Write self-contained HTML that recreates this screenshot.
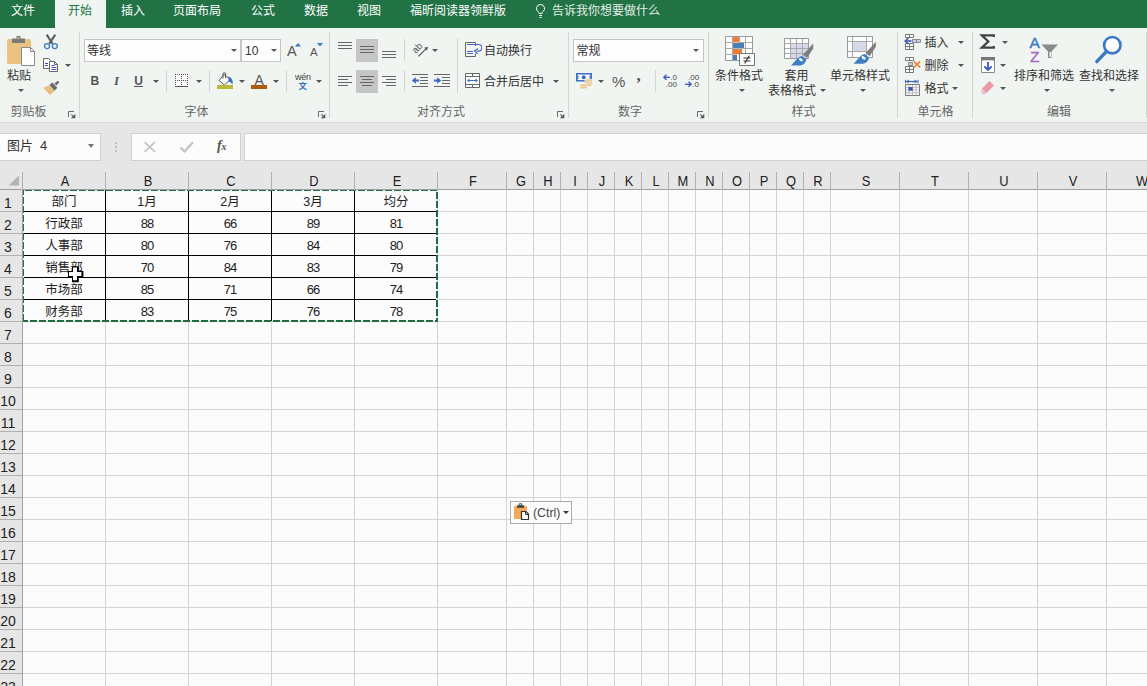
<!DOCTYPE html>
<html lang="zh-CN"><head><meta charset="utf-8"><title>Excel</title>
<style>
*{box-sizing:border-box;margin:0;padding:0}
html,body{width:1147px;height:686px;overflow:hidden;background:#fcfcfc}
body{position:relative;font-family:"Liberation Sans","Noto Sans CJK SC",sans-serif;font-size:12px;color:#333}
.abs,#tabs span,#ribbon *,#fbar *,#grid *,#hdr *,#rows *{position:absolute}
#tabs{position:absolute;left:0;top:0;width:1147px;height:28px;background:#217346}
#tabs span{top:3px;height:16px;line-height:16px;color:#fff;font-size:12px;white-space:nowrap}
#tabs .act{left:55px;top:0;width:51px;height:28px;background:#f1f5f1}
#ribbon{position:absolute;left:0;top:28px;width:1147px;height:94px;background:#f1f5f1}
#ribbon .sep{top:4px;width:1px;height:86px;background:#d2d5d2}
#ribbon .gl{top:76px;height:16px;line-height:16px;color:#666;font-size:12px;white-space:nowrap}
#ribbon .t{height:16px;line-height:16px;font-size:12px;color:#333;white-space:nowrap}
#ribbon .ar{width:0;height:0;border-left:3px solid transparent;border-right:3px solid transparent;border-top:3px solid #555}
#fbar{position:absolute;left:0;top:122px;width:1147px;height:49px;background:#e6e6e6;border-top:1px solid #dadada}
#fbar .box{top:10px;height:28px;background:#fcfcfc;border:1px solid #cfcfcf}
#hdr{position:absolute;left:0;top:171px;width:1147px;height:19px;background:#e6e6e6;border-bottom:1px solid #9f9f9f}
#hdr span{top:1px;height:18px;line-height:18px;font-size:14px;color:#222;text-align:center;transform:scaleX(.920)}
#hdr i{top:1px;width:1px;height:18px;background:#b0b0b0}
#rows{position:absolute;left:0;top:190px;width:23px;height:496px;background:#e6e6e6;border-right:1px solid #9f9f9f}
#rows span{left:0;width:16px;height:22px;line-height:27px;font-size:14px;color:#222;text-align:center;border-bottom:1px solid #b0b0b0;width:22px;padding-right:6px}
#grid{position:absolute;left:23px;top:190px;width:1124px;height:496px;background:#fcfcfc}
#grid i.v{top:0;width:1px;height:496px;background:#d4d4d4}
#grid i.h{left:0;height:1px;width:1124px;background:#d4d4d4}
#grid b{background:#000}
#grid span{height:21px;line-height:25px;font-size:12.500px;color:#222;text-align:center;font-weight:normal}
#grid span.n{letter-spacing:-1px;font-size:13px;line-height:22px;padding-top:1px}
</style></head><body>

<div id="tabs"><div class="abs act"></div>
<span style="left:11px;color:#fff">文件</span>
<span style="left:68px;color:#217346">开始</span>
<span style="left:121px;color:#fff">插入</span>
<span style="left:173px;color:#fff">页面布局</span>
<span style="left:251px;color:#fff">公式</span>
<span style="left:304px;color:#fff">数据</span>
<span style="left:357px;color:#fff">视图</span>
<span style="left:410px;color:#fff">福昕阅读器领鲜版</span>
<span style="left:552px;color:#e4efe7">告诉我你想要做什么</span>
<svg class="abs" style="left:534px;top:3px" width="13" height="16" viewBox="0 0 13 16"><path d="M6.5 1.5a4 4 0 0 0-2.3 7.3c.5.5.8 1 .8 1.700h3c0-.7.3-1.200.8-1.700A4 4 0 0 0 6.500 1.500z" fill="none" stroke="#fff" stroke-width="1"/><path d="M5 12.500h3M5.500 14.500h2" stroke="#fff" stroke-width="1"/></svg>
</div>
<div id="ribbon"><svg style="left:6px;top:7px" width="30" height="32" viewBox="0 0 30 32"><rect x="1" y="4" width="24" height="25" rx="1.500" fill="#eac282"/><path d="M6 3.500h4.500v-2.500h4v2.500h4.500v4.500h-13z" fill="#7a7a7a"/><rect x="11.500" y="2.200" width="2" height="1.500" fill="#eac282"/><path d="M15.500 12.500h9l4 4v14h-13z" fill="#fff" stroke="#8a8a8a" stroke-width="1"/><path d="M24.500 12.500v4h4" fill="none" stroke="#8a8a8a" stroke-width="1"/></svg>
<span class="t" style="left:7px;top:39.5px">粘贴</span>
<i class="ar" style="left:17.5px;top:61px"></i>
<svg style="left:43px;top:6px" width="16" height="16" viewBox="0 0 16 16"><path d="M3.700 0.600l5.800 9M12.300 0.600L6.300 9.600" stroke="#5c5c5c" stroke-width="2.100" fill="none"/><circle cx="4" cy="12.100" r="2.500" fill="none" stroke="#3a78c4" stroke-width="1.300"/><circle cx="11.800" cy="12.100" r="2.500" fill="none" stroke="#3a78c4" stroke-width="1.300"/></svg>
<svg style="left:42px;top:29px" width="17" height="16" viewBox="0 0 17 16"><path d="M1.500 1.500h5l2 2v8h-7z" fill="#fdfdfd" stroke="#686868" stroke-width="1"/><path d="M7.500 4.500h5l3 3v7h-8z" fill="#fdfdfd" stroke="#686868" stroke-width="1"/><path d="M12.500 4.500v3h3" fill="none" stroke="#686868" stroke-width="1"/><path d="M9.500 8.500h3M9.500 10.500h5M9.500 12.500h5" stroke="#3a55b4" stroke-width="1"/><path d="M3 6.500h3M3 8.500h3" stroke="#3a55b4" stroke-width="1"/></svg>
<i class="ar" style="left:64.5px;top:35.5px"></i>
<svg style="left:43px;top:52px" width="17" height="16" viewBox="0 0 17 16"><path d="M0.300 7.700l5.700-2.100 5.300 5.600-4.300 3.900z" fill="#e8bd7a"/><path d="M6.400 5.100l2.900-2.500 5.100 5.100-2.900 3z" fill="#6a6a6a"/><path d="M11.300 3.600l3.600-2.800 1.500 1.400-3 3.400z" fill="#6a6a6a"/></svg>
<span class="gl" style="left:10.5px;top:75.5px">剪贴板</span>
<svg style="left:68px;top:83px" width="8" height="8" viewBox="0 0 8 8"><path d="M0.500 6V0.500H6" fill="none" stroke="#6a6a6a" stroke-width="1"/><path d="M3.300 3.300L6 6" stroke="#6a6a6a" stroke-width="1.200"/><path d="M7.300 2.800V7.300H2.800z" fill="#5a5a5a"/></svg>
<i class="sep" style="left:79px;top:4px;height:86px"></i>
<div style="left:84px;top:11px;width:157px;height:23px;background:#fdfdfd;border:1px solid #c6c6c6"></div>
<div style="left:241px;top:11px;width:40px;height:23px;background:#fdfdfd;border:1px solid #c6c6c6"></div>
<span class="t" style="left:87px;top:14.5px">等线</span>
<i class="ar" style="left:230.5px;top:21px"></i>
<span class="t" style="left:245px;top:14.5px;font-size:12px">10</span>
<i class="ar" style="left:270.5px;top:21px"></i>
<span class="t" style="left:287px;top:14.5px;font-size:14.500px;color:#555">A</span>
<svg style="left:295px;top:14.5px" width="6" height="4" viewBox="0 0 6 4"><path d="M0 3.500L3 0L6 3.500z" fill="#3a78c4"/></svg>
<span class="t" style="left:310px;top:15.5px;font-size:11.500px;color:#555">A</span>
<svg style="left:316.5px;top:14.5px" width="6" height="4" viewBox="0 0 6 4"><path d="M0 0H6L3 3.500z" fill="#3a78c4"/></svg>
<span class="t" style="left:90.5px;top:44.5px;font-weight:bold;font-size:12px;color:#555">B</span>
<span class="t" style="left:114px;top:44.5px;font-family:'Liberation Serif',serif;font-style:italic;font-weight:bold;font-size:13px;color:#555">I</span>
<span class="t" style="left:134px;top:44.5px;font-size:12px;font-weight:bold;color:#555;border-bottom:1px solid #555;height:15px;line-height:18px;top:44px;width:9px;text-align:center;overflow:hidden">U</span>
<i class="ar" style="left:152.5px;top:52px"></i>
<i class="sep" style="left:166px;top:42px;height:22px"></i>
<svg style="left:175px;top:46px" width="14" height="14" viewBox="0 0 14 14"><rect x="0" y="0" width="13" height="12" fill="#fdfdfd"/><path d="M0 0.500h13M0 6.500h13M0.500 0v11M6.500 0v11M12.500 0v11" stroke="#4a4a4a" stroke-width="1" stroke-dasharray="1 1" fill="none" shape-rendering="crispEdges"/><path d="M0 12.500h13" stroke="#555" stroke-width="1" shape-rendering="crispEdges"/></svg>
<i class="ar" style="left:195.5px;top:52px"></i>
<i class="sep" style="left:209px;top:42px;height:22px"></i>
<svg style="left:216px;top:44px" width="19" height="18" viewBox="0 0 19 18"><path d="M8 2.500l6.500 4.800-6 5.700-5.500-4.500z" fill="#fdfdfd" stroke="#555" stroke-width="1"/><path d="M7 6.500v-4.500a1.300 1.300 0 0 1 2.600 0V6" fill="none" stroke="#555" stroke-width="1"/><path d="M12.500 4.500c3 1 5 4 4 8-.800-1.500-2-2.500-4-3.300z" fill="#3a6fc4"/><rect x="1" y="13" width="16" height="4" fill="#bcb83c"/></svg>
<i class="ar" style="left:238.5px;top:52px"></i>
<span class="t" style="left:254.5px;top:44px;font-size:14px;color:#555">A</span>
<div style="left:251px;top:57px;width:16px;height:4px;background:#b25808"></div>
<i class="ar" style="left:272.5px;top:52px"></i>
<i class="sep" style="left:286px;top:42px;height:22px"></i>
<span class="t" style="left:295px;top:40.5px;font-size:9px;color:#444;letter-spacing:-0.300px">wén</span>
<span class="t" style="left:298.5px;top:50px;font-size:8.500px;color:#2f6fc4;font-weight:bold">文</span>
<i class="ar" style="left:315.5px;top:52px"></i>
<span class="gl" style="left:184.5px;top:75.5px">字体</span>
<svg style="left:318px;top:83px" width="8" height="8" viewBox="0 0 8 8"><path d="M0.500 6V0.500H6" fill="none" stroke="#6a6a6a" stroke-width="1"/><path d="M3.300 3.300L6 6" stroke="#6a6a6a" stroke-width="1.200"/><path d="M7.300 2.800V7.300H2.800z" fill="#5a5a5a"/></svg>
<i class="sep" style="left:329px;top:4px;height:86px"></i>
<div style="left:356px;top:11px;width:22px;height:23px;background:#c6c6c6"></div>
<div style="left:356px;top:42px;width:22px;height:23px;background:#c6c6c6"></div>
<div style="left:338px;top:14px;width:14px;height:1px;background:#666"></div>
<div style="left:338px;top:17px;width:14px;height:1px;background:#666"></div>
<div style="left:338px;top:20px;width:14px;height:1px;background:#666"></div>
<div style="left:360px;top:18px;width:14px;height:1px;background:#666"></div>
<div style="left:360px;top:21px;width:14px;height:1px;background:#666"></div>
<div style="left:360px;top:24px;width:14px;height:1px;background:#666"></div>
<div style="left:382px;top:23px;width:14px;height:1px;background:#666"></div>
<div style="left:382px;top:26px;width:14px;height:1px;background:#666"></div>
<div style="left:382px;top:29px;width:14px;height:1px;background:#666"></div>
<div style="left:338px;top:48px;width:14px;height:1px;background:#666"></div>
<div style="left:338px;top:51px;width:10px;height:1px;background:#666"></div>
<div style="left:338px;top:54px;width:14px;height:1px;background:#666"></div>
<div style="left:338px;top:57px;width:10px;height:1px;background:#666"></div>
<div style="left:360px;top:48px;width:14px;height:1px;background:#666"></div>
<div style="left:362px;top:51px;width:10px;height:1px;background:#666"></div>
<div style="left:360px;top:54px;width:14px;height:1px;background:#666"></div>
<div style="left:362px;top:57px;width:10px;height:1px;background:#666"></div>
<div style="left:382px;top:48px;width:14px;height:1px;background:#666"></div>
<div style="left:386px;top:51px;width:10px;height:1px;background:#666"></div>
<div style="left:382px;top:54px;width:14px;height:1px;background:#666"></div>
<div style="left:386px;top:57px;width:10px;height:1px;background:#666"></div>
<i class="sep" style="left:404px;top:11px;height:22px"></i>
<i class="sep" style="left:404px;top:42px;height:22px"></i>
<svg style="left:411px;top:13px" width="18" height="17" viewBox="0 0 18 17"><path d="M7.400 15.400L15.500 7.300" stroke="#555" stroke-width="1.200" fill="none"/><path d="M17 5.800l-3.800 1 2.800 2.800z" fill="#555"/><text x="0" y="0" transform="translate(4.800 13) rotate(-47)" font-family="Liberation Sans,sans-serif" font-size="9.500" fill="#555">ab</text></svg>
<i class="ar" style="left:431.5px;top:21px"></i>
<i class="sep" style="left:457px;top:10px;height:55px"></i>
<svg style="left:464px;top:14px" width="18" height="16" viewBox="0 0 18 16"><path d="M11.500 4V0.500H1.500V14.500H11.500V11.500" fill="none" stroke="#666" stroke-width="1"/><path d="M3 2.500h12M3 9.500h6M3 11.500h6" stroke="#4a62c4" stroke-width="1" fill="none"/><path d="M14.500 2.500a3.300 3.300 0 0 1 0 6.600H12.500" fill="none" stroke="#4a62c4" stroke-width="1.100"/><path d="M13.800 6.500L10.500 9.100l3.300 2.600" fill="none" stroke="#4a62c4" stroke-width="1.100"/></svg>
<span class="t" style="left:484px;top:15px">自动换行</span>
<svg style="left:411px;top:45px" width="18" height="15" viewBox="0 0 18 15"><path d="M1 1.500h16M9 4.500h8M9 7.500h8M9 10.500h8M1 13.500h16" stroke="#666" stroke-width="1" fill="none"/><path d="M3 7.500h5" stroke="#3a62c4" stroke-width="2"/><path d="M0.800 7.500l4-3.200v6.400z" fill="#3a62c4"/></svg>
<svg style="left:433px;top:45px" width="18" height="15" viewBox="0 0 18 15"><path d="M1 1.500h16M9 4.500h8M9 7.500h8M9 10.500h8M1 13.500h16" stroke="#666" stroke-width="1" fill="none"/><path d="M1 7.500h5" stroke="#3a62c4" stroke-width="2"/><path d="M8.200 7.500l-4-3.200v6.400z" fill="#3a62c4"/></svg>
<svg style="left:464px;top:44px" width="17" height="17" viewBox="0 0 17 17"><path d="M1.500 1.500h14v14h-14z" fill="#fff" stroke="#666" stroke-width="1"/><path d="M1.500 4.500h14M1.500 12.500h14M8.500 1.500v3M8.500 12.500v3" stroke="#666" stroke-width="1" fill="none"/><path d="M4.500 8.500h8" stroke="#3a6fc4" stroke-width="1"/><path d="M3 8.500l2.500-2v4zM14 8.500l-2.500-2v4z" fill="#3a6fc4"/></svg>
<span class="t" style="left:484px;top:45.5px">合并后居中</span>
<i class="ar" style="left:553px;top:52px"></i>
<span class="gl" style="left:417px;top:75.5px">对齐方式</span>
<svg style="left:556.5px;top:83px" width="8" height="8" viewBox="0 0 8 8"><path d="M0.500 6V0.500H6" fill="none" stroke="#6a6a6a" stroke-width="1"/><path d="M3.300 3.300L6 6" stroke="#6a6a6a" stroke-width="1.200"/><path d="M7.300 2.800V7.300H2.800z" fill="#5a5a5a"/></svg>
<i class="sep" style="left:568px;top:4px;height:86px"></i>
<div style="left:573px;top:11px;width:131px;height:23px;background:#fdfdfd;border:1px solid #c6c6c6"></div>
<span class="t" style="left:576.5px;top:14.5px">常规</span>
<i class="ar" style="left:693px;top:21px"></i>
<svg style="left:575px;top:44px" width="18" height="18" viewBox="0 0 18 18"><path d="M1.800 1.800h14.400v7h-14.400z" fill="#fdfdfd" stroke="#3a6fc4" stroke-width="1.600"/><circle cx="8.700" cy="5.300" r="2" fill="#3a6fc4"/><path d="M3 3.500v3.500M15 3.500v3.500" stroke="#3a6fc4" stroke-width="1"/><ellipse cx="13.500" cy="8.300" rx="3.800" ry="1.400" fill="#eac282" stroke="#f1f5f1" stroke-width="0.700"/><ellipse cx="13.500" cy="10.600" rx="3.800" ry="1.400" fill="#eac282" stroke="#f1f5f1" stroke-width="0.700"/><ellipse cx="13.500" cy="12.900" rx="3.800" ry="1.400" fill="#eac282" stroke="#f1f5f1" stroke-width="0.700"/><ellipse cx="8.500" cy="13.300" rx="3.800" ry="1.400" fill="#eac282" stroke="#f1f5f1" stroke-width="0.700"/><ellipse cx="8.500" cy="15.600" rx="3.800" ry="1.400" fill="#eac282" stroke="#f1f5f1" stroke-width="0.700"/></svg>
<i class="ar" style="left:597.5px;top:52px"></i>
<span class="t" style="left:612px;top:46px;font-size:15px;color:#555">%</span>
<span class="t" style="left:636.5px;top:39.5px;font-size:17px;font-weight:bold;color:#555;font-family:'Liberation Serif',serif">,</span>
<i class="sep" style="left:655px;top:42px;height:22px"></i>
<svg style="left:662px;top:45px" width="17" height="15" viewBox="0 0 17 15"><path d="M2.500 4.300h5.500" stroke="#3a55b4" stroke-width="1.300"/><path d="M4.500 1.800L1.800 4.300l2.700 2.500" fill="none" stroke="#3a55b4" stroke-width="1.300"/><text x="8.300" y="6.800" font-family="Liberation Sans,sans-serif" font-size="8" fill="#444">.0</text><text x="3.800" y="14" font-family="Liberation Sans,sans-serif" font-size="8" fill="#444">.00</text></svg>
<svg style="left:684px;top:45px" width="17" height="15" viewBox="0 0 17 15"><text x="4" y="6.800" font-family="Liberation Sans,sans-serif" font-size="8" fill="#444">.00</text><path d="M1 11.300h5.500" stroke="#3a55b4" stroke-width="1.300"/><path d="M4.500 8.800L7.200 11.300l-2.700 2.500" fill="none" stroke="#3a55b4" stroke-width="1.300"/><text x="8.300" y="14" font-family="Liberation Sans,sans-serif" font-size="8" fill="#444">.0</text></svg>
<span class="gl" style="left:618px;top:75.5px">数字</span>
<svg style="left:696.5px;top:83px" width="8" height="8" viewBox="0 0 8 8"><path d="M0.500 6V0.500H6" fill="none" stroke="#6a6a6a" stroke-width="1"/><path d="M3.300 3.300L6 6" stroke="#6a6a6a" stroke-width="1.200"/><path d="M7.300 2.800V7.300H2.800z" fill="#5a5a5a"/></svg>
<i class="sep" style="left:708px;top:4px;height:86px"></i>
<svg style="left:724px;top:7px" width="32" height="32" viewBox="0 0 32 32"><path d="M1.500 1.500h27v24h-27z" fill="#fdfdfd"/><rect x="9" y="2" width="6" height="5.500" fill="#ed7d31"/><rect x="9" y="8" width="11" height="5.500" fill="#4a7ebb"/><rect x="9" y="14" width="9" height="5.500" fill="#ed7d31"/><rect x="9" y="20" width="4" height="5" fill="#4a7ebb"/><path d="M1.500 7.500h7M15 7.500h13.500M1.500 13.500h7M20 13.500h8.500M1.500 19.500h7M18 19.500h10.500M8.500 1.500v24M15.500 1.500v6M21.500 1.500v24" stroke="#a8a8a8" stroke-width="1" fill="none"/><path d="M1.500 1.500h27v24h-27z" fill="none" stroke="#9a9a9a" stroke-width="1"/><path d="M15.500 18.500h15v12h-15z" fill="#fdfdfd" stroke="#777" stroke-width="1"/><path d="M19.500 23h7M19.500 26h7M25.300 20.800l-4.600 7.600" stroke="#333" stroke-width="1.100" fill="none"/></svg>
<span class="t" style="left:699px;width:80px;text-align:center;top:40px">条件格式</span>
<i class="ar" style="left:738.5px;top:61px"></i>
<svg style="left:783px;top:9px" width="32" height="30" viewBox="0 0 32 30"><path d="M1.500 1.500h24v20h-24z" fill="#fdfdfd"/><path d="M7.500 6.500h18v15h-18z" fill="#d6d9ea"/><path d="M1.500 6.500h24M1.500 11.500h24M1.500 16.500h24M7.500 1.500v20M13.500 1.500v20M19.500 1.500v20" stroke="#a8a8a8" stroke-width="1" fill="none"/><path d="M1.500 1.500h24v20h-24z" fill="none" stroke="#9a9a9a" stroke-width="1"/><path d="M30.2 6.6L19.9 17.8L23.9 21.1L30.2 11.6z" fill="#7d7d7d"/><path d="M19 19L23.4 22.3C22.7 25.6 20.2 28.6 16.2 28.6L7.7 28.6C11.2 26.6 14.2 19.6 19 19z" fill="#3f7ec4"/><ellipse cx="17.9" cy="22.8" rx="2.300" ry="1.300" transform="rotate(35 17.9 22.8)" fill="#fdfdfd"/></svg>
<span class="t" style="left:756.5px;width:80px;text-align:center;top:40px">套用</span>
<span class="t" style="left:752px;width:80px;text-align:center;top:55px">表格格式</span>
<i class="ar" style="left:819.5px;top:61px"></i>
<svg style="left:846px;top:7px" width="32" height="30" viewBox="0 0 32 30"><path d="M1.500 1.500h25v21h-25z" fill="#fdfdfd"/><rect x="6.500" y="6.500" width="14" height="10" fill="#d6d9ea"/><path d="M1.500 6.500h25M1.500 16.500h25M6.500 1.500v21M20.500 1.500v21" stroke="#a8a8a8" stroke-width="1" fill="none"/><path d="M1.500 1.500h25v21h-25z" fill="none" stroke="#9a9a9a" stroke-width="1"/><path d="M29.9 6.7L19.6 17.9L23.6 21.2L29.9 11.7z" fill="#7d7d7d"/><path d="M18.7 19.1L23.1 22.4C22.4 25.7 19.9 28.7 15.9 28.7L7.4 28.7C10.9 26.7 13.9 19.7 18.7 19.1z" fill="#3f7ec4"/><ellipse cx="17.6" cy="22.9" rx="2.300" ry="1.300" transform="rotate(35 17.6 22.9)" fill="#fdfdfd"/></svg>
<span class="t" style="left:820px;width:80px;text-align:center;top:39.5px">单元格样式</span>
<i class="ar" style="left:859.5px;top:61px"></i>
<span class="gl" style="left:791.5px;top:75.5px">样式</span>
<i class="sep" style="left:897px;top:4px;height:86px"></i>
<svg style="left:904px;top:5px" width="18" height="18" viewBox="0 0 18 18"><path d="M1.500 1.500h8v3h-8zM1.500 10.500h8v6h-8z" fill="#fdfdfd" stroke="#777" stroke-width="1"/><path d="M5.500 1.500v3M5.500 10.500v6M1.500 13.500h8" stroke="#777" stroke-width="1" fill="none"/><path d="M8.500 6.500h8v3h-8z" fill="#c8d0e4" stroke="#888" stroke-width="1"/><path d="M12.500 6.500v3" stroke="#888" stroke-width="1"/><path d="M2.500 8h5" stroke="#3a55b4" stroke-width="1.600"/><path d="M4.300 5L1.200 8l3.100 3" fill="none" stroke="#3a55b4" stroke-width="1.600"/></svg>
<span class="t" style="left:924.5px;top:6.5px">插入</span>
<i class="ar" style="left:957.5px;top:13px"></i>
<svg style="left:904px;top:28px" width="18" height="18" viewBox="0 0 18 18"><path d="M1.500 1.500h8v3h-8zM1.500 10.500h8v6h-8z" fill="#fdfdfd" stroke="#777" stroke-width="1"/><path d="M5.500 1.500v3M5.500 10.500v6M1.500 13.500h8" stroke="#777" stroke-width="1" fill="none"/><path d="M4.500 6.500h4v3h-4z" fill="#c8d0e4" stroke="#888" stroke-width="1"/><path d="M9.800 5.300l6.400 6M16.200 5.300l-6.400 6" stroke="#e8853a" stroke-width="1.700" fill="none"/></svg>
<span class="t" style="left:924.5px;top:29.5px">删除</span>
<i class="ar" style="left:957.5px;top:36px"></i>
<svg style="left:904px;top:51px" width="17" height="18" viewBox="0 0 17 18"><path d="M2 2.500h11.500" stroke="#3a62c4" stroke-width="1.200"/><path d="M1.500 0.800v3.500M14 0.800v3.500" stroke="#3a62c4" stroke-width="1"/><path d="M2.300 2.500l2.500-2v4zM13.200 2.500l-2.500-2v4z" fill="#3a62c4"/><path d="M1.500 5.500h14v11h-14z" fill="#fdfdfd" stroke="#777" stroke-width="1"/><path d="M1.500 8.300h14M1.500 11h14M1.500 13.800h14M5 5.500v11M8.500 5.500v11M12 5.500v11" stroke="#aaa" stroke-width="0.800" fill="none"/><rect x="4.500" y="8" width="4.200" height="3.700" fill="#3a55b4"/></svg>
<span class="t" style="left:924.5px;top:52.5px">格式</span>
<i class="ar" style="left:951.5px;top:59px"></i>
<span class="gl" style="left:917.5px;top:75.5px">单元格</span>
<i class="sep" style="left:972px;top:4px;height:86px"></i>
<svg style="left:979px;top:5px" width="17" height="17" viewBox="0 0 17 17"><path d="M14.800 4V2.300H2.800l6.500 6.200L2.800 14.700h12V13" fill="none" stroke="#444" stroke-width="2.300" stroke-linejoin="miter"/></svg>
<i class="ar" style="left:1001.5px;top:13px"></i>
<svg style="left:980px;top:28px" width="16" height="18" viewBox="0 0 16 18"><path d="M1.500 1.500h13v15h-13z" fill="#fdfdfd" stroke="#8a8a8a" stroke-width="1"/><rect x="1" y="1" width="14" height="3.300" fill="#777"/><path d="M8 6v7.500" stroke="#3a55c4" stroke-width="1.800"/><path d="M4.300 10.300L8 14l3.700-3.700" fill="none" stroke="#3a55c4" stroke-width="1.800"/></svg>
<i class="ar" style="left:999.5px;top:36px"></i>
<svg style="left:980px;top:52px" width="15" height="15" viewBox="0 0 15 15"><path d="M9.500 1l4.500 4.500-7.500 7.500L2 8.500z" fill="#e89aa6"/><path d="M2 8.500L6.500 13l-1.500 1.200H3L0.800 12z" fill="#f0c0c8"/></svg>
<i class="ar" style="left:999.5px;top:59px"></i>
<span class="t" style="left:1029.5px;top:7px;font-size:15.500px;color:#3a78c4;-webkit-text-stroke:0.400px #3a78c4">A</span>
<span class="t" style="left:1030px;top:21px;font-size:15.500px;color:#a566c4;-webkit-text-stroke:0.400px #a566c4">Z</span>
<svg style="left:1041px;top:16px" width="18" height="15" viewBox="0 0 18 15"><path d="M0.500 0.500h16.500l-6.500 7v6.500h-3.500v-6.500z" fill="#8a8a8a"/><path d="M8.500 8v5h1.500v-5z" fill="#f1f5f1"/></svg>
<span class="t" style="left:1004px;width:80px;text-align:center;top:40px">排序和筛选</span>
<i class="ar" style="left:1043.5px;top:61px"></i>
<svg style="left:1094px;top:7px" width="30" height="31" viewBox="0 0 30 31"><circle cx="18.300" cy="10.200" r="8.200" fill="#fdfdfd" stroke="#3a78c4" stroke-width="2.600"/><path d="M12.300 16.600l-9.500 10" stroke="#3a78c4" stroke-width="3.400" stroke-linecap="round"/></svg>
<span class="t" style="left:1069px;width:80px;text-align:center;top:40px">查找和选择</span>
<i class="ar" style="left:1108.5px;top:61px"></i>
<span class="gl" style="left:1047px;top:75.5px">编辑</span>
<i class="sep" style="left:1146px;top:4px;height:86px"></i></div>
<div id="fbar">
<div class="box" style="left:-1px;width:102px"></div>
<span style="left:7px;top:14px;font-size:13px;line-height:18px;color:#333;white-space:nowrap;word-spacing:3.500px">图片 4</span>
<div style="left:88px;top:21px;width:0;height:0;border-left:3.500px solid transparent;border-right:3.500px solid transparent;border-top:4px solid #777"></div>
<div style="left:115px;top:19px;width:2px;height:2px;background:#c0c0c0"></div>
<div style="left:115px;top:23px;width:2px;height:2px;background:#c0c0c0"></div>
<div style="left:115px;top:27px;width:2px;height:2px;background:#c0c0c0"></div>
<div class="box" style="left:131px;width:110px"></div>
<svg style="left:143px;top:18px" width="14" height="12" viewBox="0 0 14 12"><path d="M1.500 1.200l10.500 9.600M12 1.200l-10.500 9.600" stroke="#c2c2c2" stroke-width="1.600" fill="none"/></svg>
<svg style="left:179px;top:18px" width="16" height="13" viewBox="0 0 16 13"><path d="M1.500 6.500l4 4L14 1.200" stroke="#c2c2c2" stroke-width="2.200" fill="none"/></svg>
<span style="left:217px;top:14px;font-family:'Liberation Serif',serif;font-style:italic;font-weight:bold;font-size:14px;line-height:18px;color:#555;white-space:nowrap;letter-spacing:-0.500px">f<span style="position:static;font-size:10.500px">x</span></span>
<div class="box" style="left:244px;width:910px"></div>
</div>
<div id="hdr">
<svg style="left:8px;top:4px" width="12" height="11" viewBox="0 0 12 11"><path d="M11 0.500V10.500H0.500z" fill="#b4b4b4"/></svg>
<i style="left:22px"></i>
<span style="left:24px;width:82px">A</span><i style="left:105px"></i>
<span style="left:107px;width:82px">B</span><i style="left:188px"></i>
<span style="left:190px;width:82px">C</span><i style="left:271px"></i>
<span style="left:273px;width:82px">D</span><i style="left:354px"></i>
<span style="left:356px;width:82px">E</span><i style="left:437px"></i>
<span style="left:439px;width:68px">F</span><i style="left:506px"></i>
<span style="left:508px;width:26px">G</span><i style="left:533px"></i>
<span style="left:535px;width:26px">H</span><i style="left:560px"></i>
<span style="left:562px;width:26px">I</span><i style="left:587px"></i>
<span style="left:589px;width:26px">J</span><i style="left:614px"></i>
<span style="left:616px;width:26px">K</span><i style="left:641px"></i>
<span style="left:643px;width:26px">L</span><i style="left:668px"></i>
<span style="left:670px;width:26px">M</span><i style="left:695px"></i>
<span style="left:697px;width:26px">N</span><i style="left:722px"></i>
<span style="left:724px;width:26px">O</span><i style="left:749px"></i>
<span style="left:751px;width:26px">P</span><i style="left:776px"></i>
<span style="left:778px;width:26px">Q</span><i style="left:803px"></i>
<span style="left:805px;width:26px">R</span><i style="left:830px"></i>
<span style="left:832px;width:68px">S</span><i style="left:899px"></i>
<span style="left:901px;width:68px">T</span><i style="left:968px"></i>
<span style="left:970px;width:68px">U</span><i style="left:1037px"></i>
<span style="left:1039px;width:68px">V</span><i style="left:1106px"></i>
<span style="left:1108px;width:68px">W</span><i style="left:1175px"></i>
</div>
<div id="rows">
<span style="top:0px">1</span>
<span style="top:22px">2</span>
<span style="top:44px">3</span>
<span style="top:66px">4</span>
<span style="top:88px">5</span>
<span style="top:110px">6</span>
<span style="top:132px">7</span>
<span style="top:154px">8</span>
<span style="top:176px">9</span>
<span style="top:198px">10</span>
<span style="top:220px">11</span>
<span style="top:242px">12</span>
<span style="top:264px">13</span>
<span style="top:286px">14</span>
<span style="top:308px">15</span>
<span style="top:330px">16</span>
<span style="top:352px">17</span>
<span style="top:374px">18</span>
<span style="top:396px">19</span>
<span style="top:418px">20</span>
<span style="top:440px">21</span>
<span style="top:462px">22</span>
<span style="top:484px">23</span>
</div>
<div id="grid">
<i class="v" style="left:82px"></i>
<i class="v" style="left:165px"></i>
<i class="v" style="left:248px"></i>
<i class="v" style="left:331px"></i>
<i class="v" style="left:414px"></i>
<i class="v" style="left:483px"></i>
<i class="v" style="left:510px"></i>
<i class="v" style="left:537px"></i>
<i class="v" style="left:564px"></i>
<i class="v" style="left:591px"></i>
<i class="v" style="left:618px"></i>
<i class="v" style="left:645px"></i>
<i class="v" style="left:672px"></i>
<i class="v" style="left:699px"></i>
<i class="v" style="left:726px"></i>
<i class="v" style="left:753px"></i>
<i class="v" style="left:780px"></i>
<i class="v" style="left:807px"></i>
<i class="v" style="left:876px"></i>
<i class="v" style="left:945px"></i>
<i class="v" style="left:1014px"></i>
<i class="v" style="left:1083px"></i>
<i class="v" style="left:1152px"></i>
<i class="h" style="top:21px"></i>
<i class="h" style="top:43px"></i>
<i class="h" style="top:65px"></i>
<i class="h" style="top:87px"></i>
<i class="h" style="top:109px"></i>
<i class="h" style="top:131px"></i>
<i class="h" style="top:153px"></i>
<i class="h" style="top:175px"></i>
<i class="h" style="top:197px"></i>
<i class="h" style="top:219px"></i>
<i class="h" style="top:241px"></i>
<i class="h" style="top:263px"></i>
<i class="h" style="top:285px"></i>
<i class="h" style="top:307px"></i>
<i class="h" style="top:329px"></i>
<i class="h" style="top:351px"></i>
<i class="h" style="top:373px"></i>
<i class="h" style="top:395px"></i>
<i class="h" style="top:417px"></i>
<i class="h" style="top:439px"></i>
<i class="h" style="top:461px"></i>
<i class="h" style="top:483px"></i>
<i class="h" style="top:505px"></i>
<b style="left:1px;top:21px;width:412px;height:1px"></b>
<b style="left:1px;top:43px;width:412px;height:1px"></b>
<b style="left:1px;top:65px;width:412px;height:1px"></b>
<b style="left:1px;top:87px;width:412px;height:1px"></b>
<b style="left:1px;top:109px;width:412px;height:1px"></b>
<b style="left:82px;top:0;width:1px;height:131px"></b>
<b style="left:165px;top:0;width:1px;height:131px"></b>
<b style="left:248px;top:0;width:1px;height:131px"></b>
<b style="left:331px;top:0;width:1px;height:131px"></b>
<span style="left:0px;top:0px;width:82px">部门</span>
<span style="left:83px;top:0px;width:82px">1月</span>
<span style="left:166px;top:0px;width:82px">2月</span>
<span style="left:249px;top:0px;width:82px">3月</span>
<span style="left:332px;top:0px;width:82px">均分</span>
<span style="left:0px;top:22px;width:82px">行政部</span>
<span class="n" style="left:83px;top:22px;width:82px">88</span>
<span class="n" style="left:166px;top:22px;width:82px">66</span>
<span class="n" style="left:249px;top:22px;width:82px">89</span>
<span class="n" style="left:332px;top:22px;width:82px">81</span>
<span style="left:0px;top:44px;width:82px">人事部</span>
<span class="n" style="left:83px;top:44px;width:82px">80</span>
<span class="n" style="left:166px;top:44px;width:82px">76</span>
<span class="n" style="left:249px;top:44px;width:82px">84</span>
<span class="n" style="left:332px;top:44px;width:82px">80</span>
<span style="left:0px;top:66px;width:82px">销售部</span>
<span class="n" style="left:83px;top:66px;width:82px">70</span>
<span class="n" style="left:166px;top:66px;width:82px">84</span>
<span class="n" style="left:249px;top:66px;width:82px">83</span>
<span class="n" style="left:332px;top:66px;width:82px">79</span>
<span style="left:0px;top:88px;width:82px">市场部</span>
<span class="n" style="left:83px;top:88px;width:82px">85</span>
<span class="n" style="left:166px;top:88px;width:82px">71</span>
<span class="n" style="left:249px;top:88px;width:82px">66</span>
<span class="n" style="left:332px;top:88px;width:82px">74</span>
<span style="left:0px;top:110px;width:82px">财务部</span>
<span class="n" style="left:83px;top:110px;width:82px">83</span>
<span class="n" style="left:166px;top:110px;width:82px">75</span>
<span class="n" style="left:249px;top:110px;width:82px">76</span>
<span class="n" style="left:332px;top:110px;width:82px">78</span>
<svg style="left:0;top:0" width="416" height="133" viewBox="0 0 416 133" shape-rendering="crispEdges"><path d="M0 0.500H415" stroke="#217346" stroke-width="1" stroke-dasharray="7 2" stroke-dashoffset="7" fill="none"/><path d="M0.500 0V132" stroke="#217346" stroke-width="1" stroke-dasharray="7 2" stroke-dashoffset="2" fill="none"/><path d="M414 0V132" stroke="#1e6b41" stroke-width="2" stroke-dasharray="7 2" stroke-dashoffset="7" fill="none"/><path d="M0 131H415" stroke="#1e6b41" stroke-width="2" stroke-dasharray="7 2" stroke-dashoffset="2" fill="none"/></svg>
<svg style="left:44px;top:75px" width="18" height="18" viewBox="0 0 18 18"><path d="M5 1.600h6.800v4.400h4.600v6.800h-4.600v4.400h-6.800v-4.400h-4v-6.800h4z" fill="#000"/><path d="M6 2.600h4v4.400h4.400v4h-4.400v4.200h-4v-4.200h-4v-4h4z" fill="#fdfdfd"/></svg>
<div style="left:487px;top:311px;width:62px;height:23px;background:#fcfcfc;border:1px solid #ababab"></div>
<svg style="left:490px;top:313px" width="18" height="18" viewBox="0 0 18 18"><path d="M1 3h13v13H1z" fill="#f4a95a"/><path d="M4 2.300h7v2.500H4z" fill="#444"/><path d="M6.200 0.800h2.600v2h-2.600z" fill="none" stroke="#444" stroke-width="0.900"/><path d="M8.500 8.500h4.500l2.500 2.500v5.500h-7z" fill="#fff" stroke="#333" stroke-width="1.200"/><path d="M12.500 8.500v3h3" fill="none" stroke="#333" stroke-width="1"/></svg>
<span style="left:510px;top:314px;font-size:12.300px;line-height:18px;height:18px;color:#444;white-space:nowrap">(Ctrl)</span>
<div style="left:540px;top:321px;width:0;height:0;border-left:3px solid transparent;border-right:3px solid transparent;border-top:3px solid #333"></div>
</div>
</body></html>
